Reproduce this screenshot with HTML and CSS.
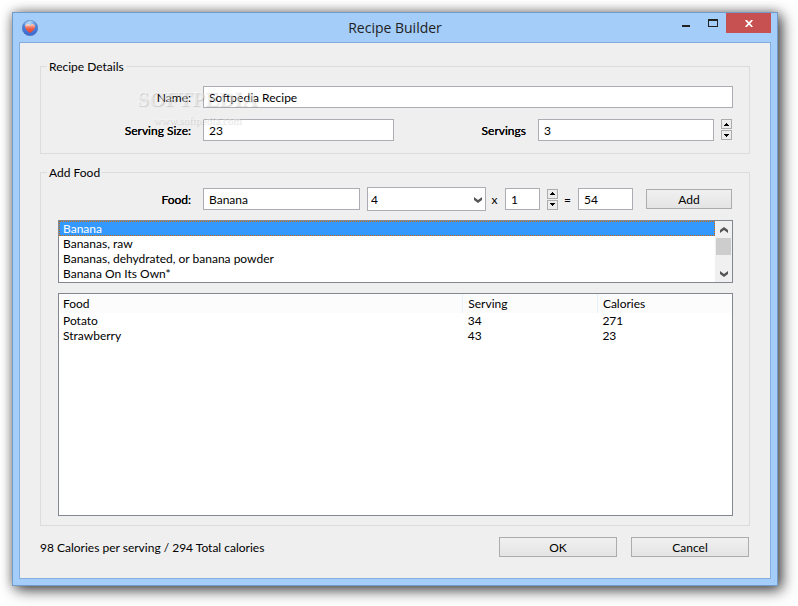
FILE: index.html
```html
<!DOCTYPE html>
<html lang="en">
<head>
  <meta charset="UTF-8">
  <title>Recipe Builder</title>
  <link rel="stylesheet" href="styles.css">
</head>
<body>
  <div class="window">
    <header class="titlebar">
      <svg class="app-icon" viewBox="0 0 16 16" width="16" height="16" aria-hidden="true">
        <defs>
          <radialGradient id="ball" cx="0.5" cy="0.1" r="0.9">
            <stop offset="0" stop-color="#a8d4f4"/>
            <stop offset="0.5" stop-color="#4f86dc"/>
            <stop offset="1" stop-color="#3a62cc"/>
          </radialGradient>
          <linearGradient id="heart" x1="0" y1="0" x2="0" y2="1">
            <stop offset="0" stop-color="#fbd0c4"/>
            <stop offset="0.5" stop-color="#f0624c"/>
            <stop offset="1" stop-color="#e04030"/>
          </linearGradient>
        </defs>
        <circle cx="8" cy="8" r="7.8" fill="url(#ball)" stroke="#4a6fae" stroke-width="0.4"/>
        <path d="M8 13C5 11 3 9 3 6.500C3 3.600 6.600 3 8 5.400C9.400 3 13.200 3.600 13.200 6.500C13.200 9 11 11 8 13Z" fill="url(#heart)"/>
        <ellipse cx="6" cy="4" rx="3.500" ry="2" fill="#fff" opacity="0.3"/>
      </svg>
      <h1 class="title">Recipe Builder</h1>
      <div class="window-buttons">
        <button type="button" class="win-btn" aria-label="Minimize">
          <svg viewBox="0 0 8 10" width="8" height="10"><rect y="7" width="8" height="2" fill="#222"/></svg>
        </button>
        <button type="button" class="win-btn" aria-label="Maximize">
          <svg viewBox="0 0 10 8" width="10" height="8"><path d="M0 0H10V8H0ZM1 2V7H9V2Z" fill="#222" fill-rule="evenodd"/></svg>
        </button>
        <button type="button" class="win-btn close" aria-label="Close">
          <svg viewBox="0 0 8 7" width="8" height="7"><path d="M0.700 0L7.300 7M7.300 0L0.700 7" stroke="#fff" stroke-width="1.800"/></svg>
        </button>
      </div>
    </header>

    <form class="client">
      <fieldset class="group details">
        <legend>Recipe Details</legend>
        <div class="watermark" aria-hidden="true">
          <div class="mark-name">SOFTPEDIA</div>
          <div class="mark-url">www.softpedia.com</div>
        </div>
        <label for="name">Name:</label>
        <input type="text" id="name" class="wide" value="Softpedia Recipe">
        <label for="size" class="strong">Serving Size:</label>
        <input type="text" id="size" value="23">
        <label for="servings" class="strong">Servings</label>
        <div class="with-spinner">
          <input type="text" id="servings" value="3">
          <div class="spinner">
            <button type="button" aria-label="More servings"><svg viewBox="0 0 5 3" width="5" height="3"><path d="M2 0H3V1H4V2H5V3H0V2H1V1H2Z"/></svg></button>
            <button type="button" aria-label="Fewer servings"><svg viewBox="0 0 5 3" width="5" height="3"><path d="M0 0H5V1H4V2H3V3H2V2H1V1H0Z"/></svg></button>
          </div>
        </div>
      </fieldset>

      <fieldset class="group add-food">
        <legend>Add Food</legend>
        <div class="food-row">
          <label for="food" class="strong">Food:</label>
          <input type="text" id="food" class="food-name" value="Banana">
          <div class="dropdown">
            <select id="unit" aria-label="Serving">
              <option>4</option>
            </select>
            <svg class="arrow" viewBox="0 0 8 6" width="8" height="6"><path d="M0 0L4 3L8 0V3L4 6L0 3Z" fill="#555"/></svg>
          </div>
          <label for="count" class="sign">x</label>
          <input type="text" id="count" class="count" value="1">
          <div class="spinner">
            <button type="button" aria-label="Increase"><svg viewBox="0 0 5 3" width="5" height="3"><path d="M2 0H3V1H4V2H5V3H0V2H1V1H2Z"/></svg></button>
            <button type="button" aria-label="Decrease"><svg viewBox="0 0 5 3" width="5" height="3"><path d="M0 0H5V1H4V2H3V3H2V2H1V1H0Z"/></svg></button>
          </div>
          <label for="total" class="sign">=</label>
          <input type="text" id="total" class="total" value="54">
          <button type="button" class="btn add">Add</button>
        </div>

        <div class="matches">
          <select size="4" aria-label="Matching foods">
            <option selected>Banana</option>
            <option>Bananas, raw</option>
            <option>Bananas, dehydrated, or banana powder</option>
            <option>Banana On Its Own*</option>
          </select>
          <div class="scrollbar">
            <button type="button" aria-label="Scroll up"><svg viewBox="0 0 8 6" width="8" height="6"><path d="M0 6L4 3L8 6V3L4 0L0 3Z" fill="#555"/></svg></button>
            <div class="thumb"></div>
            <button type="button" aria-label="Scroll down"><svg viewBox="0 0 8 6" width="8" height="6"><path d="M0 0L4 3L8 0V3L4 6L0 3Z" fill="#555"/></svg></button>
          </div>
        </div>

        <div class="foods">
          <table>
            <thead>
              <tr><th class="col-food">Food</th><th>Serving</th><th>Calories</th></tr>
            </thead>
            <tbody>
              <tr><td>Potato</td><td>34</td><td>271</td></tr>
              <tr><td>Strawberry</td><td>43</td><td>23</td></tr>
            </tbody>
          </table>
        </div>
      </fieldset>

      <footer class="footer">
        <div class="summary">98 Calories per serving / 294 Total calories</div>
        <button type="button" class="btn">OK</button>
        <button type="button" class="btn">Cancel</button>
      </footer>
    </form>
  </div>
</body>
</html>
```
FILE: styles.css
```css
* {
  box-sizing: border-box;
}

body {
  margin: 0;
  padding: 12px 20px 20px 12px;
  height: 100vh;
  display: flex;
  background: #fff;
  color: #000;
  font-family: Lato, "Open Sans", sans-serif;
  font-size: 12px;
  line-height: 15px;
}

input, select, button {
  font: inherit;
  color: inherit;
  border-radius: 0;
  margin: 0;
}

button {
  padding: 0;
  display: flex;
  align-items: center;
  justify-content: center;
}

svg {
  display: block;
}

.window {
  flex: 1;
  display: flex;
  flex-direction: column;
  padding: 0 6px 6px;
  border: 1px solid #739bc8;
  background: #a4cdf9;
  box-shadow: 4px 4px 14px rgba(0, 0, 0, 0.7), 0 0 10px rgba(0, 0, 0, 0.3);
}

/* title bar */
.titlebar {
  height: 29px;
  display: grid;
  grid-template-columns: 1fr auto 1fr;
  align-items: center;
}

.app-icon {
  margin-left: 3px;
}

.title {
  margin: 0;
  font-family: "Open Sans", sans-serif;
  font-size: 14px;
  font-weight: normal;
  color: #222;
}

.window-buttons {
  display: flex;
  justify-content: flex-end;
  align-self: start;
}

.win-btn {
  width: 27px;
  height: 20px;
  border: 0;
  background: none;
}

.close {
  width: 45px;
  background: #c75050;
}

/* form area */
.client {
  flex: 1;
  display: flex;
  flex-direction: column;
  padding: 15px 20px 21px;
  border: 1px solid #84acdd;
  background: #efefef;
}

.group {
  position: relative;
  min-width: 0;
  margin: 0;
  border: 1px solid #dcdcdc;
}

.group legend {
  margin-left: -11px;
  padding: 0 2px;
  line-height: 17px;
}

.group label {
  text-align: right;
}

.group .strong {
  text-shadow: 0 0 0 #000;
}

input, select {
  width: 100%;
  min-width: 0;
  height: 22px;
  padding: 0 5px;
  border: 1px solid #abadb3;
  background: #fff;
}

.details {
  display: grid;
  grid-template-columns: 133px 191fr 120px 195fr;
  gap: 11px 12px;
  align-items: center;
  padding: 11px 16px 12px 17px;
}

.wide {
  grid-column: 2 / -1;
}

.with-spinner {
  display: flex;
  gap: 7px;
}

.spinner {
  flex: none;
  display: flex;
  flex-direction: column;
  gap: 1px;
  margin-right: 1px;
}

.spinner button {
  width: 11px;
  height: 10px;
  border: 1px solid #acacac;
  background: #ececec;
}

.add-food {
  flex: 1;
  display: flex;
  flex-direction: column;
  margin-top: 10px;
  padding: 6px 16px 9px 17px;
}

.food-row {
  display: flex;
  align-items: center;
}

.food-row .strong {
  width: 133px;
  margin-right: 12px;
}

.food-name {
  flex: 145;
}

.dropdown {
  position: relative;
  flex: 119;
  margin-left: 7px;
}

.dropdown select {
  display: block;
  height: 24px;
  padding: 0 3px;
  appearance: none;
}

.arrow {
  position: absolute;
  right: 4px;
  top: 10px;
  pointer-events: none;
}

.food-row .sign {
  width: 19px;
  padding-right: 2px;
  text-align: center;
}

.count {
  width: 35px;
  margin-right: 7px;
}

.total {
  width: 55px;
  margin-right: 13px;
}

.btn {
  width: 118px;
  height: 20px;
  border: 1px solid #acacac;
  background: linear-gradient(#f0f0f0, #e4e4e4);
}

.add {
  width: 86px;
  margin-right: 1px;
}

/* search results */
.matches {
  display: flex;
  margin-top: 9px;
  height: 63px;
  border: 1px solid #828790;
  background: #fff;
}

.matches select {
  flex: 1;
  height: 61px;
  padding: 0;
  border: 0;
  outline: 0;
  overflow: hidden;
}

.matches option {
  height: 15px;
  min-height: 15px;
  padding: 0 4px;
}

.matches option:checked {
  background: linear-gradient(#3399ff, #3399ff);
  outline: 1px dotted #cc6600;
  outline-offset: -1px;
  -webkit-text-fill-color: #fff;
}

.scrollbar {
  width: 17px;
  display: flex;
  flex-direction: column;
  padding: 0 1px;
  background: #f0f0f0;
}

.scrollbar button {
  height: 17px;
  border: 0;
  background: none;
}

.thumb {
  height: 17px;
  margin-bottom: auto;
  background: #cdcdcd;
}

/* foods in the recipe */
.foods {
  flex: 1;
  margin-top: 10px;
  border: 1px solid #828790;
  background: #fff;
}

.foods table {
  width: 100%;
  table-layout: fixed;
  border-collapse: collapse;
}

.foods th, .foods td {
  padding: 0 5px;
  text-align: left;
  font-weight: normal;
}

.foods th:first-child, .foods td:first-child {
  padding-left: 4px;
}

.foods th {
  height: 19px;
  border-right: 1px solid #e5f1fb;
  background: #fcfcfc;
}

.foods th:last-child {
  border-right: 0;
}

.foods .col-food {
  width: 60%;
}

.footer {
  display: flex;
  align-items: center;
  gap: 14px;
  margin-top: 11px;
  padding-right: 1px;
}

.summary {
  flex: 1;
}

/* stamp over the first fields */
.watermark {
  position: absolute;
  left: 96px;
  top: 10px;
  pointer-events: none;
  text-align: center;
  color: rgba(255, 255, 255, 0.5);
  text-shadow: 1px 1px 1px rgba(0, 0, 0, 0.15);
}

.mark-name {
  font: bold 21px/28px "Liberation Serif", serif;
}

.mark-url {
  font: 11px/14px "Liberation Serif", serif;
}
```
